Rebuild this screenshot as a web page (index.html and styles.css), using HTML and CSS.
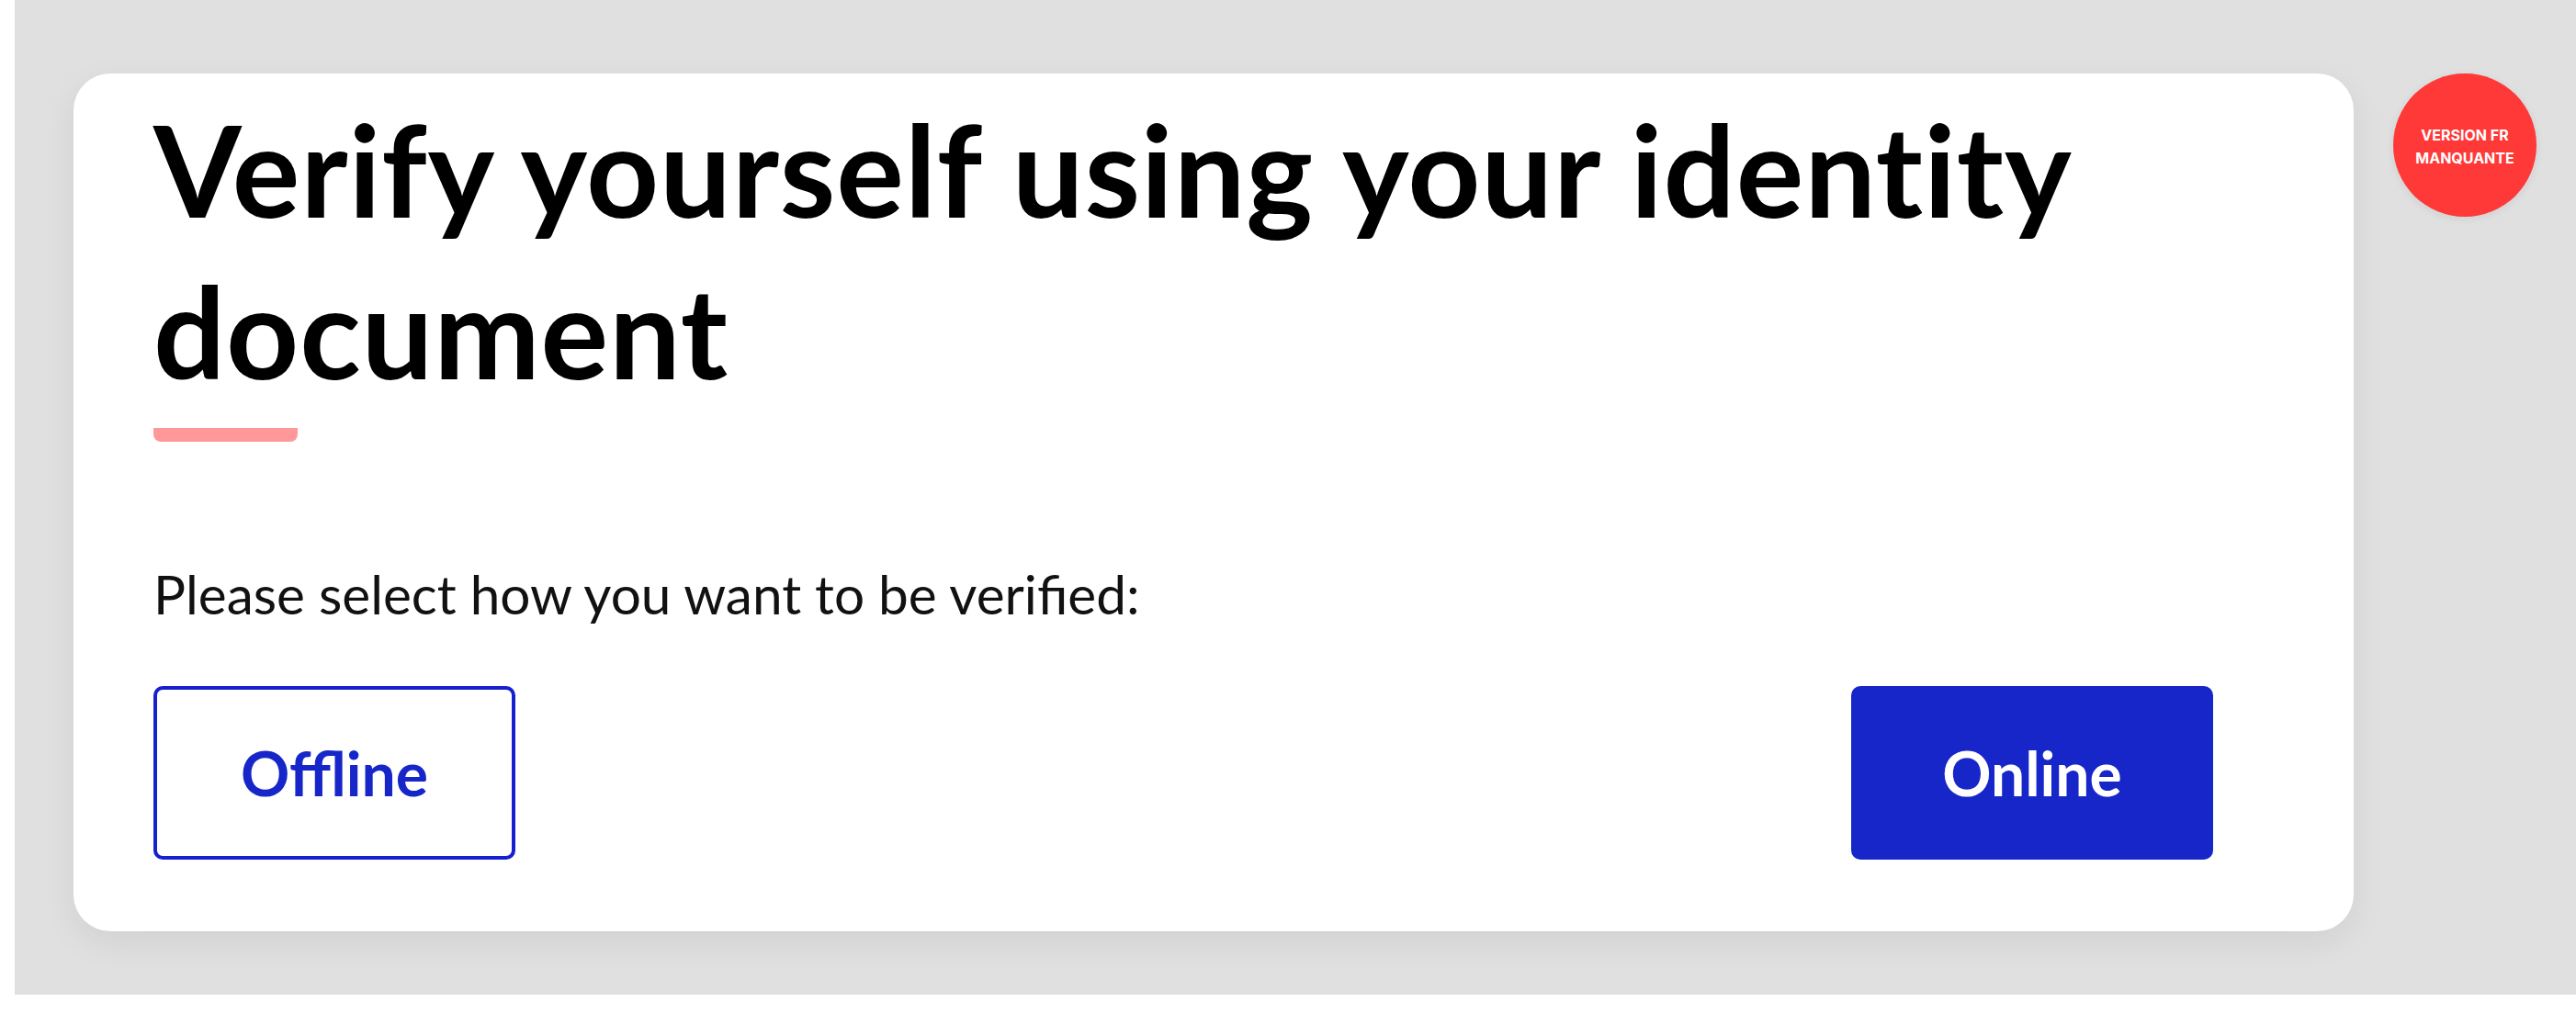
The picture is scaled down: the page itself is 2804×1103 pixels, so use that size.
FILE: index.html
```html
<!DOCTYPE html>
<html lang="en">
<head>
  <meta charset="UTF-8">
  <meta name="viewport" content="width=device-width, initial-scale=1.0">
  <title>Verify yourself</title>
  <link rel="stylesheet" href="styles.css">
</head>
<body>

  <div class="container-doc">
    <article class="content-card">
      <h1 class="tit-verify">Verify yourself using your identity document</h1>   <!-- 밑에 빨간 줄은 ::after -->
      <p class="txt-select">Please select how you want to be verified:</p>
      <div class="box-btn">
        <button type="button" class="btn-g btn-line">Offline</button>
        <button type="button" class="btn-g btn-fill">Online</button>
      </div>
    </article>
    <div class="badge-lang">
      <span class="txt-badge">VERSION FR<br>MANQUANTE</span>
    </div>
  </div>

</body>
</html>
```

FILE: styles.css
```css
/* 초기화 */
* {
  padding: 0;
  margin: 0;
  box-sizing: border-box;
}
button {
  cursor: pointer;
  border: 0;
  background: none;
}

body {
  background-color: #FFFFFF;
  font-family: Lato, "Noto Sans", sans-serif;
  color: #0A0A0A;
}

/* 회색 바탕 */
.container-doc {
  display: flex;
  align-items: flex-start;
  height: 1083px;
  margin-left: 16px;
  padding: 80px 0 0 64px;
  background-color: #E0E0E0;
}

/* 흰 카드 */
.content-card {
  width: 2482px;
  padding: 16px 153px 78px 87px;
  border-radius: 40px;
  background-color: #FFFFFF;
  box-shadow: 0 12px 36px rgba(0,0,0,0.07);
}

.tit-verify {
  font-size: 138px;
  font-weight: 700;
  line-height: 176px;
  letter-spacing: 0.8px;
  color: #000;
}
.tit-verify::after {          /* 제목 아래 분홍 줄 */
  content: '';
  display: block;
  width: 157px;
  height: 15px;
  margin-top: 18px;
  border-radius: 0 0 8px 8px;
  background-color: #FF9999;
}

.txt-select {
  margin-top: 123px;
  font-size: 58.5px;
  line-height: 84px;
  color: #111;
}

/* 버튼 두 개 양쪽으로 */
.box-btn {
  display: flex;
  justify-content: space-between;
  margin-top: 59px;
}
.btn-g {
  width: 394px;
  height: 189px;
  border-radius: 10px;
  font-family: Lato, "Noto Sans", sans-serif;
  font-size: 66px;
  font-weight: 700;
}
.btn-line {
  border: 4px solid #1620CE;
  color: #1726C9;
}
.btn-fill {
  background-color: #1726C9;
  color: #FFFFFF;
}

/* 오른쪽 위 빨간 동그라미 */
.badge-lang {
  display: flex;
  align-items: center;
  justify-content: center;
  flex-shrink: 0;
  width: 156px;
  height: 156px;
  margin-left: 43px;
  border-radius: 50%;
  background-color: #FF3838;
  box-shadow: 0 2px 10px rgba(0,0,0,0.08);
}
.txt-badge {
  padding-top: 4px;
  font-family: Inter, "Liberation Sans", sans-serif;
  font-size: 16px;
  font-weight: 700;
  line-height: 25px;
  text-align: center;
  color: #FFFFFF;
}
```
